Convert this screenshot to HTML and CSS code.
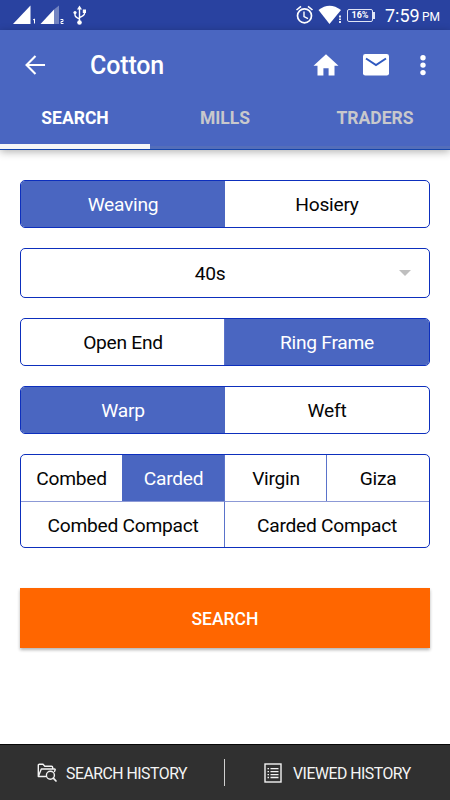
FILE: index.html
```html
<!DOCTYPE html>
<html lang="en">
<head>
<meta charset="utf-8">
<title>Cotton</title>
<link rel="stylesheet" href="styles.css">
</head>
<body>
<div class="screen">
  <div class="status">
    <svg class="status-left" width="90" height="30" viewBox="0 0 90 30" fill="#fff">
      <path d="M13 24L30.500 5.500V24Z"/>
      <path d="M40.500 24L54 9.500V24Z"/>
      <path d="M54 9.500L59 5.500V24H54Z" opacity=".35"/>
      <path d="M33 20l1.500-1V23.500M60.500 19.500h2.500v2h-2v2h2.500" fill="none" stroke="#fff" stroke-width="1"/>
      <path d="M79.500 5.500l-2.500 4h5z"/>
      <circle cx="79.500" cy="22.500" r="2.300"/>
      <path d="M79.500 8v14M75 12v3q0 2 4.500 4M84.500 11v2.500q0 2-5 4" fill="none" stroke="#fff" stroke-width="1.400"/>
      <circle cx="75" cy="12.500" r="1.600"/>
      <path d="M82.800 9.500h3.200v3.500h-3.200z"/>
    </svg>
    <div class="status-right">
      <svg width="48" height="30" viewBox="0 0 48 30" fill="none" stroke="#fff">
        <circle cx="9.500" cy="15.800" r="7" stroke-width="1.700"/>
        <path d="M9 11.500v5l4 2.200" stroke-width="1.400"/>
        <path d="M1.500 10l4.500-3.700M17.500 10L13 6.300" stroke-width="1.600"/>
        <path d="M23.500 10Q34.500 1.500 46 10L34.500 24Z" fill="#fff" stroke="none"/>
        <path d="M43.500 14.500h5v10h-5z" fill="#2942a0" stroke="none"/>
        <path d="M45 15.500v2M45 18.500v1.500M45 21v2" stroke-width="1.800"/>
      </svg>
      <div class="battery">16%</div>
      <div class="time">7:59</div>
      <div class="pm">PM</div>
    </div>
  </div>
  <header class="appbar">
    <div class="toolbar">
      <svg class="back" width="22" height="22" viewBox="0 0 22 22" fill="none" stroke="#fff" stroke-width="2.200"><path d="M21 11H2M11 1.500L1.600 11l9.400 9.500"/></svg>
      <h1 class="title">Cotton</h1>
      <svg class="home" width="26" height="22" viewBox="0 0 26 22" fill="#fff"><path d="M13 .300L25.500 11.700H21.500V21.500H15.600V14.300H10.400V21.500H4.500V11.700H.500Z"/></svg>
      <svg class="mail" width="26" height="22" viewBox="0 0 26 22"><rect width="26" height="21.500" rx="2.300" fill="#fff"/><path d="M3 4.500L13 11l10-6.500" fill="none" stroke="#2f59c0" stroke-width="2"/></svg>
      <svg class="more" width="6" height="22" viewBox="0 0 6 22" fill="#fff"><circle cx="3" cy="3.700" r="2.700"/><circle cx="3" cy="11.100" r="2.700"/><circle cx="3" cy="18.600" r="2.700"/></svg>
    </div>
    <nav class="tabs">
      <div class="tab active">SEARCH</div>
      <div class="tab">MILLS</div>
      <div class="tab">TRADERS</div>
    </nav>
  </header>
  <main class="form">
    <div class="group"><div class="opt on">Weaving</div><div class="opt">Hosiery</div></div>
    <div class="group select"><div class="opt wide">40s</div><svg class="caret" width="12" height="6" viewBox="0 0 12 6"><path d="M0 0h12L6 6z" fill="#bfbfbf"/></svg></div>
    <div class="group"><div class="opt">Open End</div><div class="opt line on">Ring Frame</div></div>
    <div class="group"><div class="opt on">Warp</div><div class="opt">Weft</div></div>
    <div class="group grid">
      <div class="opt">Combed</div><div class="opt on">Carded</div><div class="opt line">Virgin</div><div class="opt line">Giza</div>
      <div class="opt half">Combed Compact</div><div class="opt half line">Carded Compact</div>
    </div>
    <div class="submit">SEARCH</div>
  </main>
  <footer class="footer">
    <svg class="folder" width="20" height="20" viewBox="0 0 20 20" fill="none" stroke="#f2f2f2" stroke-width="1.400" stroke-linejoin="round" stroke-linecap="round">
      <path d="M8.500 13.500H1.300V2.300Q1.300 1.200 2.400 1.200H6L7.800 3.300H14.500Q15.700 3.300 15.700 4.500V6M1.500 13L4.300 6H17.500Q18.500 6 18.100 7L17.500 8.500"/>
      <circle cx="13.400" cy="12.200" r="4"/><path d="M16.300 15.200L19 18" stroke-width="1.700"/>
    </svg>
    <span class="foot-a">SEARCH HISTORY</span>
    <i class="divider"></i>
    <svg class="list" width="18" height="20" viewBox="0 0 18 20" fill="none" stroke="#f2f2f2" stroke-width="1.400"><rect x="1" y="1" width="16" height="18"/><path d="M3.500 5.700h1.500M6.500 5.700h8M3.500 8.700h1.500M6.500 8.700h8M3.500 11.700h1.500M6.500 11.700h8M3.500 14.500h1.500M6.500 14.500h8" stroke-width="1.300"/></svg>
    <span class="foot-b">VIEWED HISTORY</span>
  </footer>
</div>
</body>
</html>
```
FILE: styles.css
```css
* { box-sizing: border-box; }
body { margin: 0; font-family: Roboto, "Liberation Sans", sans-serif; background: #fff; }
svg { display: block; flex: none; }
.screen { width: 450px; height: 800px; display: flex; flex-direction: column; overflow: hidden; }
.status { height: 30px; flex: none; background: #2942a0; color: #fff; display: flex; justify-content: space-between; }
.status-right { display: flex; width: 155px; height: 30px; align-items: center; white-space: nowrap; }
.battery { position: relative; width: 26px; height: 13px; margin-left: 4px; border: 1px solid #dfe4f5; border-radius: 2px; font-size: 9px; line-height: 11px; font-weight: 700; text-align: center; }
.battery::after { content: ""; position: absolute; right: -3px; top: 2px; width: 2px; height: 7px; background: #dfe4f5; }
.time { margin-left: 12px; width: 33px; font-size: 18px; line-height: 30px; padding-top: 2px; }
.pm { margin-left: 4px; font-size: 12px; line-height: 34px; padding-top: 3px; }
.appbar { height: 120px; flex: none; background: #4a66c1; border-bottom: 1px solid #1445ab; box-shadow: 0 2px 8px rgba(0,0,0,.3); color: #fff; }
.toolbar { height: 70px; display: flex; align-items: center; padding-left: 25px; }
.back { width: 21px; }
.title { margin: 0 0 0 44px; width: 223px; font-size: 25px; letter-spacing: -.150px; line-height: 70px; font-weight: 500; padding-top: 2px; }
.mail { margin-left: 24px; }
.more { margin-left: 31px; }
.tabs { height: 49px; display: grid; grid-template-columns: repeat(3, 1fr); }
.tab { text-align: center; font-size: 17.500px; line-height: 36px; font-weight: 700; color: #c8c8cc; border-bottom: 3px solid #546eba; }
.tab.active { color: #fff; border-bottom: 5px solid #f7f7f7; }
.form { flex: 1; padding: 30px 20px 0; display: flex; flex-direction: column; gap: 20px; }
.group { height: 48px; border: 1px solid #0d2fbd; border-radius: 5px; display: grid; grid-template-columns: 204px 204px; overflow: hidden; }
.opt { text-align: center; font-size: 19.200px; letter-spacing: -.260px; line-height: 48px; color: #050505; white-space: nowrap; }
.on { background: #4a66c1; color: #fff; }
.select { height: 50px; display: flex; align-items: center; }
.wide { width: 378px; line-height: 50px; padding-top: 1px; }
.grid { height: 94px; grid-template-columns: 101px 103px 102px 102px; grid-template-rows: 46px 46px; }
.half { grid-column: span 2; border-top: 1px solid #8c99d6; line-height: 47px; }
.line { margin-left: -1px; border-left: 1px solid #5a73ca; }
.submit { margin-top: 20px; height: 60px; background: #ff6600; color: #fff; text-align: center; font-size: 17.500px; font-weight: 500; line-height: 62px; box-shadow: 0 2px 3px rgba(0,0,0,.3); }
.footer { height: 56px; flex: none; background: #303030; border-top: 1px solid #080808; color: #f5f5f5; display: flex; align-items: center; font-size: 15.800px; letter-spacing: -.480px; white-space: nowrap; }
.folder { margin-left: 37px; }
.foot-a { margin-left: 9px; width: 121px; padding-top: 1px; }
.divider { margin-left: 37px; width: 1px; height: 27px; background: #d0d0d0; }
.list { margin-left: 39px; }
.foot-b { margin-left: 11px; padding-top: 1px; }
```
